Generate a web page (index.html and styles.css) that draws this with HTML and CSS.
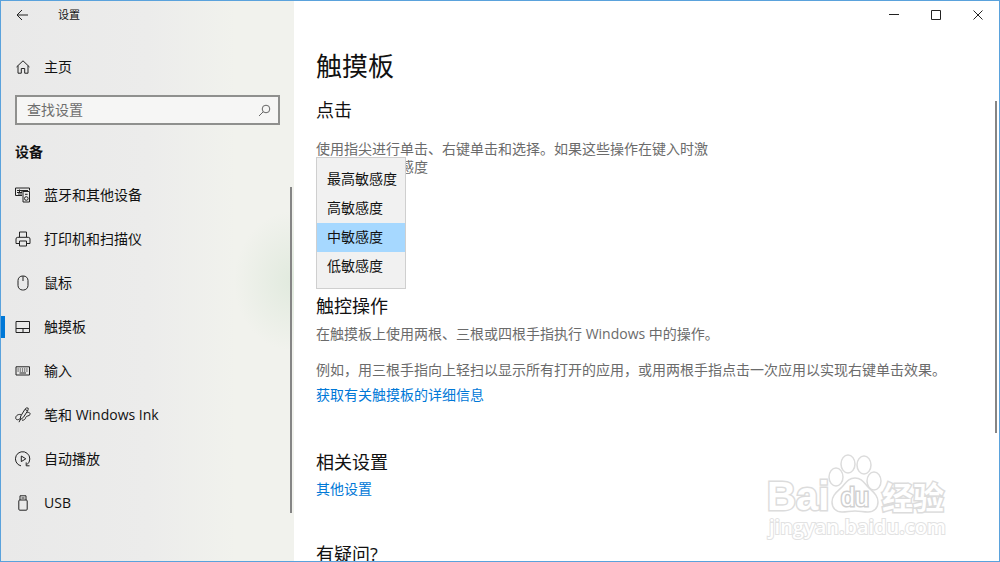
FILE: index.html
```html
<!DOCTYPE html>
<html lang="zh-CN">

<head>
    <meta charset="UTF-8">
    <meta name="viewport" content="width=device-width, initial-scale=1.0">
    <title>设置</title>
    <link rel="stylesheet" href="styles.css">
</head>

<body>
    <div class="window">
        <aside class="sidebar">
            <header class="app-bar">
                <button class="back" aria-label="返回">
                    <svg width="12" height="12" viewBox="0 0 12 12"><path d="M6 1 L1 6 L6 11 M1 6 H12" /></svg>
                </button>
                <span class="app-title">设置</span>
            </header>

            <a class="nav-link home" href="#home">
                <svg width="16" height="16" viewBox="0 0 16 16"><path d="M1.5 8 L8 1.8 L14.5 8 M3 6.8 V14.2 H6.3 V9.5 H9.7 V14.2 H13 V6.8" /></svg>
                主页
            </a>

            <div class="search">
                <input type="text" placeholder="查找设置" aria-label="查找设置">
                <svg width="13" height="13" viewBox="0 0 13 13"><circle cx="8" cy="5" r="3.8" /><path d="M5.2 7.8 L1 12" /></svg>
            </div>

            <h2 class="group">设备</h2>

            <nav>
                <a class="nav-link" href="#bluetooth">
                    <svg width="16" height="16" viewBox="0 0 16 16"><path d="M7 8.5 H0.5 V1 H14.5 V3.5 M2 3.5 H13 M2 5.5 H7 M3 7 H7 M4.5 2.5 V6 M7 3 V5" /><path d="M8 4.5 H14.5 V15 H8 Z" /><circle cx="11.3" cy="11.5" r="1.8" /><path d="M10 7.3 H12.6" /></svg>
                    蓝牙和其他设备
                </a>
                <a class="nav-link" href="#printers">
                    <svg width="16" height="16" viewBox="0 0 16 16"><path d="M4.5 6 V1 H11.5 V6 M4 12.5 H1 V8 Q1 6.3 2.7 6.3 H13.3 Q15 6.3 15 8 V12.5 H12" /><path d="M4.5 10 H11.5 V15 H4.5 Z" /></svg>
                    打印机和扫描仪
                </a>
                <a class="nav-link" href="#mouse">
                    <svg width="16" height="16" viewBox="0 0 16 16"><rect x="3" y="1" width="10" height="14" rx="4.5" /><path d="M8 1 V6" /></svg>
                    鼠标
                </a>
                <a class="nav-link active" href="#touchpad" aria-current="page">
                    <svg width="16" height="16" viewBox="0 0 16 16"><path d="M1 2.5 H14.5 V13.5 H1 Z M1 9.5 H14.5 M8 9.5 V13.5" /></svg>
                    触摸板
                </a>
                <a class="nav-link" href="#typing">
                    <svg width="16" height="16" viewBox="0 0 16 16"><path d="M1 3.8 H14.5 V12 H1 Z" /><path stroke-dasharray="1.2 1" d="M2.5 6 H13.5 M2.5 8 H13.5" /><path d="M4.5 10 H11" /></svg>
                    输入
                </a>
                <a class="nav-link" href="#pen">
                    <svg width="16" height="16" viewBox="0 0 16 16"><path d="M5 13 L5.8 9 L10 2.2 Q11.8 0 13.2 1.2 Q13.5 2.2 12.5 4 L8.5 10.2 Z M10.2 2.4 L12.4 3.8" /><path d="M5.8 7.5 C2.5 7 0.3 9.2 0.8 11.5 C1.4 13.4 3.6 12.8 4.6 11.8 M5 13 L4 15.2 M12.3 5.6 C14 5 15.6 6 15 7.6 C14.3 9.2 11.4 8.6 10.8 10.3 C10.5 12 9 13.5 7 13.2" /></svg>
                    笔和 Windows Ink
                </a>
                <a class="nav-link" href="#autoplay">
                    <svg width="16" height="16" viewBox="0 0 16 16"><path d="M6 14.9 A7.2 7.2 0 1 1 12 13.6 M14.5 14.8 H11.2 V11.4 M6.3 5 V10.6 L10.8 7.8 Z" /></svg>
                    自动播放
                </a>
                <a class="nav-link" href="#usb">
                    <svg width="16" height="16" viewBox="0 0 16 16"><path d="M5 5 V0.8 H11 V5 M6.5 3 H9.5" /><rect x="3.8" y="5" width="8.4" height="10.2" rx="1" /></svg>
                    USB
                </a>
                <span class="scrollbar"></span>
            </nav>
        </aside>

        <main>
            <header class="window-controls">
                <button aria-label="最小化"><svg width="10" height="10" viewBox="0 0 10 10"><path d="M0 4.5 H10" /></svg></button>
                <button aria-label="最大化"><svg width="10" height="10" viewBox="0 0 10 10"><path d="M0.5 0.5 H9.5 V9.5 H0.5 Z" /></svg></button>
                <button aria-label="关闭"><svg width="10" height="10" viewBox="0 0 10 10"><path d="M0.5 0.5 L9.5 9.5 M9.5 0.5 L0.5 9.5" /></svg></button>
            </header>

            <div class="content">
                <h1>触摸板</h1>

                <section class="taps">
                    <h2>点击</h2>
                    <div class="setting">
                        <label for="sensitivity">使用指尖进行单击、右键单击和选择。如果这些操作在键入时激活，请降低敏感度</label>
                        <select id="sensitivity" size="4">
                            <option>最高敏感度</option>
                            <option>高敏感度</option>
                            <option selected>中敏感度</option>
                            <option>低敏感度</option>
                        </select>
                    </div>
                </section>

                <section class="gestures">
                    <h2>触控操作</h2>
                    <p>在触摸板上使用两根、三根或四根手指执行 Windows 中的操作。</p>
                    <p>例如，用三根手指向上轻扫以显示所有打开的应用，或用两根手指点击一次应用以实现右键单击效果。</p>
                    <a href="#learn-more">获取有关触摸板的详细信息</a>
                </section>

                <section class="related">
                    <h2>相关设置</h2>
                    <a href="#additional">其他设置</a>
                </section>

                <section>
                    <h2>有疑问?</h2>
                </section>
            </div>
            <span class="scrollbar"></span>
        </main>

        <svg class="watermark" width="182" height="92" viewBox="0 0 182 92">
            <text class="brand" x="1" y="58">Bai</text>
            <ellipse cx="70" cy="25" rx="7" ry="9" />
            <ellipse cx="82" cy="12" rx="7" ry="9" />
            <ellipse cx="98" cy="13" rx="7" ry="9" />
            <ellipse cx="108" cy="29" rx="7" ry="9" />
            <path d="M89 26 C96 26 98 31 102 35 C107 40 112 43 112 50 C112 56 108 60 102 60 C97 60 94 59 89 59 C84 59 81 60 76 60 C70 60 66 56 66 50 C66 43 71 40 76 35 C80 31 82 26 89 26 Z" />
            <text class="du" x="75" y="54">du</text>
            <text class="cjk" x="116" y="57">经验</text>
            <text class="url" x="3" y="82">jingyan.baidu.com</text>
        </svg>
    </div>
</body>

</html>
```

FILE: styles.css
```css
* {
    box-sizing: border-box;
}

body {
    margin: 0;
    background-color: #fff;
    color: #111;
    font-family: "Open Sans", "Noto Sans CJK SC", sans-serif;
    font-size: 14px;
    line-height: 18px;
}

h1,
h2,
p {
    margin: 0;
    font-weight: normal;
}

button {
    padding: 0;
    border: none;
    background: none;
    cursor: pointer;
}

svg {
    display: block;
    flex-shrink: 0;
    fill: none;
    stroke: #222;
}

a {
    color: #0078d7;
    text-decoration: none;
}

.window {
    position: relative;
    display: flex;
    height: 100vh;
    overflow: hidden;
    border: 1px solid #5aa2dc;
}

/* Left pane */
.sidebar {
    width: 293px;
    flex-shrink: 0;
    background: radial-gradient(ellipse 60px 70px at 100% 280px, #e1eade, rgba(225, 234, 222, 0)), linear-gradient(to right, #e9e9e9, #ececeb 50%, #f1f2ed 80%);
}

.app-bar {
    display: flex;
    align-items: center;
    gap: 30px;
    height: 28px;
    padding-left: 15px;
}

.app-title {
    font-size: 11px;
}

.nav-link {
    position: relative;
    display: flex;
    align-items: center;
    gap: 13px;
    height: 44px;
    padding-left: 14px;
    color: #111;
}

.nav-link:hover {
    background-color: rgba(0, 0, 0, 0.06);
}

.home {
    margin-top: 16px;
}

.active::before {
    content: "";
    position: absolute;
    left: -1px;
    width: 5px;
    height: 22px;
    background-color: #0078d7;
}

.search {
    display: flex;
    align-items: center;
    height: 30px;
    margin: 6px 14px 0;
    padding: 0 7px 0 10px;
    border: 2px solid #8f908e;
    background-color: #f6f6f5;
}

.search input {
    flex: 1;
    min-width: 0;
    padding: 0;
    border: none;
    outline: none;
    background: none;
    font: inherit;
}

.search input::placeholder {
    color: #6e6e6e;
    opacity: 1;
}

.search svg {
    stroke: #666;
}

.group {
    margin: 18px 14px 12px;
    font-size: 14px;
    font-weight: bold;
}

nav {
    position: relative;
}

.scrollbar {
    position: absolute;
    width: 2px;
    background-color: #858585;
}

nav .scrollbar {
    top: 14px;
    right: 2px;
    bottom: 12px;
}

/* Right pane */
main {
    position: relative;
    flex: 1;
    min-width: 0;
}

main > .scrollbar {
    top: 100px;
    right: 2px;
    height: 332px;
}

.window-controls {
    display: flex;
    justify-content: flex-end;
    height: 28px;
}

.window-controls button {
    display: flex;
    align-items: center;
    justify-content: center;
    width: 42px;
}

.content {
    padding: 19px 21px 0 22px;
}

h1 {
    font-size: 26px;
    line-height: 36px;
}

main h2 {
    font-size: 18px;
    line-height: 24px;
}

.taps {
    margin-top: 14px;
}

.setting {
    position: relative;
    max-width: 400px;
    margin-top: 18px;
    color: #6b6b6b;
}

.setting label {
    display: block;
}

/* The open list covers the second line of the description */
.setting select {
    position: absolute;
    top: 17px;
    left: 0;
    width: 90px;
    height: 132px;
    padding: 7px 0;
    border: 1px solid #cfcfcf;
    border-radius: 0;
    outline: none;
    background-color: #f1f1f1;
    color: #111;
    font: inherit;
    overflow: hidden;
}

.setting option {
    height: 29px;
    padding: 3px 10px 0;
}

.setting option:checked {
    background: linear-gradient(#a6d8ff, #a6d8ff);
}

.gestures {
    margin-top: 118px;
}

.gestures p {
    margin: 7px 0 18px;
    color: #6b6b6b;
}

.gestures p + p {
    margin: 0 0 7px;
}

.gestures a,
.related a {
    display: block;
}

.related {
    margin: 46px 0 44px;
}

.related a {
    margin-top: 6px;
}

/* Watermark */
.watermark {
    position: absolute;
    right: 51px;
    bottom: 17px;
    fill: #fff;
    stroke: #dcdcdc;
    stroke-width: 1.5px;
    pointer-events: none;
}

.watermark text {
    font-weight: bold;
    stroke-width: 3px;
    paint-order: stroke;
}

.brand {
    font-family: "Liberation Sans", sans-serif;
    font-size: 40px;
}

.watermark .du {
    font-family: "Liberation Sans", sans-serif;
    font-size: 25px;
    font-weight: normal;
    stroke: #d0d0d0;
}

.cjk {
    font-family: "Noto Sans CJK SC", sans-serif;
    font-size: 31px;
}

.watermark .url {
    font-size: 20px;
    font-weight: 600;
    stroke: #e2e2e2;
    stroke-width: 2px;
}
```
